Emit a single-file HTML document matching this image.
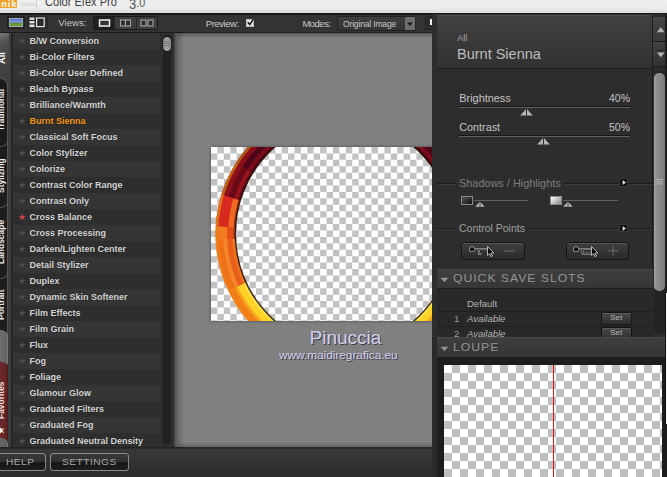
<!DOCTYPE html>
<html>
<head>
<meta charset="utf-8">
<title>Color Efex Pro 3.0</title>
<style>
*{box-sizing:border-box;margin:0;padding:0}
html,body{width:667px;height:477px;overflow:hidden}
body{position:relative;background:#808080;font-family:"Liberation Sans",sans-serif;color:#ccc;font-size:10px}
.abs{position:absolute}
/* title strip */
#title{left:0;top:0;width:667px;height:13.4px;background:linear-gradient(#efefef 0%,#ececec 60%,#dcdcdc 100%);overflow:hidden}
#title .nik{left:0;top:-2px;width:17.1px;height:10.1px;background:#f2a324;color:#fff;font-weight:bold;font-size:9px;line-height:10px;text-align:left;padding-left:1.2px;letter-spacing:1.1px;padding-top:.6px}
#title .sw{left:20px;top:.8px;font-size:4.5px;color:#cfcfcf;line-height:8px;letter-spacing:-.1px}
#title .div{left:36px;top:0;width:1px;height:9px;background:#cfcfcf}
#title .name{left:44.7px;top:-6.1px;font-size:13.5px;line-height:16px;color:#3c3c3c;white-space:nowrap;transform-origin:0 0;transform:scaleX(.819)}
#title .ver{left:128.5px;top:-6.8px;font-size:15px;line-height:18px;color:#555;white-space:nowrap;transform-origin:0 0;transform:scaleX(.86)}
/* toolbar */
#toolbar{left:0;top:13px;width:667px;height:20px;background:#333;border-top:2px solid #1a1a1a;border-bottom:1px solid #1c1c1c}
#toolbar .lbl{color:#c8c8c8;font-size:10px;line-height:12px;white-space:nowrap}
/* left panel */
#left{left:0;top:33px;width:177px;height:414px;background:#262626;overflow:hidden}
#tabs{left:0;top:0;width:8.5px;height:414px;background:#3c3c3c;overflow:hidden}
#tabedge{left:8.5px;top:0;width:2.3px;height:414px;background:#3e3e3e}
#list{left:13px;top:0;width:147px;height:414px;overflow:hidden}
#list .row{position:absolute;left:0;width:147px;height:16px;line-height:16px;font-weight:bold;font-size:9px;color:#d6d6d6;padding-left:16.5px;white-space:nowrap;text-shadow:0 0 1px rgba(0,0,0,.6)}
#list .row.a{background:#2e2e2e}
#list .row.b{background:#353535}
#list .row.sel{color:#f59a14}
#list .star{position:absolute;left:5px;top:0;font-size:9px;color:#4e4e4e;font-weight:normal;text-shadow:none}
#list .star.on{color:#d04848}
#sbar{left:160px;top:0;width:14px;height:414px;background:#2e2e2e}
#sbar .groove{left:2.7px;top:2px;width:8.8px;height:409px;border-radius:4.4px;background:#232323;box-shadow:inset 0 0 2px #1a1a1a}
#sbar .thumb{left:2px;top:2.5px;width:10.4px;height:16.5px;border-radius:5.2px;background:linear-gradient(90deg,#808080,#a4a4a4 40%,#8c8c8c);border:1px solid #1c1c1c}
#ledge{left:174px;top:0;width:3px;height:414px;background:linear-gradient(90deg,#454545,#626262)}
.vtab{position:absolute;left:-3px;width:11.3px;border:1px solid #555}
.vtxt{position:absolute;transform-origin:0 0;transform:rotate(-90deg);white-space:nowrap;line-height:9px;height:9px;font-weight:bold;font-size:8.6px}
/* bottom */
#bottom{left:0;top:447px;width:667px;height:30px;background:linear-gradient(#242424 0,#242424 1px,#393939 2.5px,#2b2b2b 100%)}
.bbtn{position:absolute;top:6.3px;height:18px;border:1px solid #8a8a8a;border-radius:3px;background:linear-gradient(#3a3a3a 0%,#303030 48%,#161616 52%,#1e1e1e 100%);color:#a9a9a9;font-size:9.3px;line-height:16px;white-space:nowrap}
.bbtn span{position:absolute;top:0;letter-spacing:.4px;transform-origin:0 50%;transform:scaleX(1.1)}
/* center */
#canvas{overflow:hidden;box-shadow:0 0 3px rgba(0,0,0,.45)}
.wm{position:absolute;white-space:nowrap;color:#d4d0ec;text-shadow:1px 1px 0 #3c3c4c;font-family:"Liberation Sans",sans-serif}
/* right panel */
#right{left:432px;top:14px;width:235px;height:463px;background:#2d2d2d;overflow:hidden}
#right .t{position:absolute;white-space:nowrap;color:#c4c4c4;font-size:11px;line-height:13px}
.cpb{border:1px solid #161616;border-radius:3px;background:linear-gradient(#3f3f3f,#2a2a2a);box-shadow:inset 0 1px 0 #555}
.setb{width:31.5px;height:12.5px;border:1px solid #161616;border-radius:2px;background:linear-gradient(#484848,#303030);box-shadow:inset 0 1px 0 #5a5a5a;color:#b4b4b4;font-size:8px;line-height:10.5px;text-align:center}
#right .xt{font-size:10.2px;letter-spacing:.8px;color:#949494;transform-origin:0 50%;transform:scaleX(1.2)}
</style>
</head>
<body>
<div id="title" class="abs">
  <div class="abs nik">nik</div>
  <div class="abs sw">Software</div>
  <div class="abs div"></div>
  <div class="abs name">Color Efex Pro</div>
  <div class="abs ver"><span style="font-size:15px;position:relative;top:1.6px">3</span><span style="font-size:12.5px">.0</span></div>
</div>
<div id="toolbar" class="abs">
  <div class="abs" style="left:6.5px;top:0.5px;width:18.5px;height:13.5px;border:1px solid #1f1f1f;border-radius:2px;background:#2a2a2a"></div>
  <div class="abs" style="left:8.8px;top:2.9px;width:14.7px;height:8.8px;background:linear-gradient(#5a78c8 0%,#7f9ad8 52%,#5a8a28 60%,#76a030 100%);border:1px solid #98a8b8"></div>
  <div class="abs" style="left:27px;top:0.5px;width:20.5px;height:13.5px;border:1px solid #262626;border-radius:2px;background:#2c2c2c"></div>
  <svg class="abs" style="left:29px;top:2px" width="17" height="11" viewBox="0 0 17 11"><rect x="0.5" y="0.5" width="5" height="2.4" fill="#ddd"/><rect x="0.5" y="4" width="5" height="2.4" fill="#ddd"/><rect x="0.5" y="7.5" width="5" height="2.6" fill="#ddd"/><rect x="7.6" y="1" width="7.6" height="8.6" fill="#2a2a2a" stroke="#e4e4e4" stroke-width="1.2"/></svg>
  <div class="abs lbl" style="left:58.3px;top:2px;font-size:9.6px">Views:</div>
  <div class="abs" style="left:93px;top:1px;width:65px;height:13.5px;border:1px solid #1a1a1a;border-radius:2px;background:#3d3d3d"></div>
  <div class="abs" style="left:94px;top:2px;width:20px;height:11.5px;background:#202020"></div>
  <div class="abs" style="left:114px;top:2px;width:1px;height:11.5px;background:#2a2a2a"></div>
  <div class="abs" style="left:135.5px;top:2px;width:1px;height:11.5px;background:#2a2a2a"></div>
  <svg class="abs" style="left:94px;top:2px" width="64" height="12" viewBox="0 0 64 12"><rect x="5.5" y="3" width="10" height="6" fill="#333" stroke="#f2f2f2" stroke-width="1.5"/><g fill="#2c2c2c" stroke="#a8a8a8" stroke-width="1.1"><rect x="26.5" y="3" width="5" height="6"/><rect x="31.5" y="3" width="5" height="6"/><rect x="47" y="3" width="5" height="6"/><rect x="54" y="3" width="5" height="6"/></g></svg>
  <div class="abs lbl" style="left:205.8px;top:2.5px;font-size:9.5px;letter-spacing:-.45px">Preview:</div>
  <div class="abs" style="left:246px;top:4px;width:8px;height:8px;background:#e6e6e6;border:1px solid #bbb"></div>
  <svg class="abs" style="left:246px;top:3px" width="9" height="9" viewBox="0 0 9 9"><path d="M1.8 4.2 L3.8 6.6 L7.4 1.2" fill="none" stroke="#111" stroke-width="1.5"/></svg>
  <div class="abs lbl" style="left:302.4px;top:2.5px;font-size:9.5px;letter-spacing:-.5px">Modes:</div>
  <div class="abs" style="left:337px;top:1px;width:79px;height:14.5px;border:1px solid #242424;border-radius:2px;background:linear-gradient(#3e3e3e,#343434)"></div>
  <div class="abs lbl" style="left:343px;top:2.5px;font-size:8.6px;letter-spacing:-.2px;color:#c6c6c6">Original Image</div>
  <div class="abs" style="left:405px;top:1.5px;width:10px;height:13px;background:#6e6e6e;border-radius:1px"></div>
  <svg class="abs" style="left:405px;top:1.5px" width="10" height="13" viewBox="0 0 10 13"><path d="M2.2 5.6 L7.8 5.6 L5 9 Z" fill="#161616"/></svg>
  <div class="abs" style="left:425px;top:1px;width:10px;height:14px;border:1px solid #222;border-radius:2px;background:#2c2c2c"></div>
  <div class="abs" style="left:430px;top:4px;width:3px;height:6px;background:#f0f0f0"></div>
</div>
<div id="left" class="abs">
  <div id="tabs" class="abs">
    <div class="abs" style="left:0;top:0;width:8.5px;height:56px;background:linear-gradient(160deg,#777 0%,#505050 18%,#444 45%,#3e3e3e 100%)"></div>
    <div class="vtab" style="top:45px;height:68.8px;background:#1b1b1b;z-index:10;border-radius:0 7.5px 7.5px 0 / 0 7.5px 6px 0"></div>
    <div class="vtab" style="top:105px;height:69.8px;background:#1d1d1d;z-index:9;border-radius:0 0 7.5px 0 / 0 0 6px 0"></div>
    <div class="vtab" style="top:166px;height:79.8px;background:#1d1d1d;z-index:8;border-radius:0 0 7.5px 0 / 0 0 6px 0"></div>
    <div class="vtab" style="top:237px;height:75px;background:#1d1d1d;z-index:7;border-radius:0"></div>
    <div class="vtab" style="top:296.5px;height:122.5px;background:linear-gradient(90deg,#707070,#626262);z-index:11;border-radius:0 7.5px 0 0 / 0 6.5px 0 0;border-color:#7a7a7a"></div>
    <div class="abs" style="left:0;top:328.3px;width:8px;height:84px;background:linear-gradient(90deg,#6c2a2c 0%,#642426 70%,#4c1a1c 100%);z-index:12;clip-path:polygon(0 0,100% 3px,100% 100%,0 100%)"></div>
    <div class="vtab" style="top:404.5px;height:14.5px;background:linear-gradient(90deg,#6a6a6a,#5c5c5c);z-index:13;border-radius:0 7.5px 0 0 / 0 6px 0 0;border-color:#777"></div>
    <div class="vtxt" style="left:-2.34px;top:30.8px;color:#fff;z-index:20;font-size:9.2px">All</div>
    <div class="vtxt" style="left:-2.8px;top:98px;color:#e8e8e8;z-index:20;font-size:8.3px">Traditional</div>
    <div class="vtxt" style="left:-2.8px;top:160.3px;color:#e8e8e8;z-index:20;font-size:8.45px">Stylizing</div>
    <div class="vtxt" style="left:-2.8px;top:230.7px;color:#e8e8e8;z-index:20;font-size:8.45px">Landscape</div>
    <div class="vtxt" style="left:-2.8px;top:286.7px;color:#e8e8e8;z-index:20;font-size:8.6px">Portrait</div>
    <div class="vtxt" style="left:-2.8px;top:386px;color:#eadede;z-index:20;font-size:8.45px">Favorites</div>
    <div class="vtxt" style="left:-4.5px;top:401.5px;color:#eee;z-index:20;font-size:10px;font-weight:normal">★</div>
  </div>
  <div id="tabedge" class="abs"></div>
  <div id="list" class="abs">
    <div class="row b" style="top:0px"><span class="star">★</span>B/W Conversion</div>
    <div class="row a" style="top:16px"><span class="star">★</span>Bi-Color Filters</div>
    <div class="row b" style="top:32px"><span class="star">★</span>Bi-Color User Defined</div>
    <div class="row a" style="top:48px"><span class="star">★</span>Bleach Bypass</div>
    <div class="row b" style="top:64px"><span class="star">★</span>Brilliance/Warmth</div>
    <div class="row a sel" style="top:80px"><span class="star">★</span>Burnt Sienna</div>
    <div class="row b" style="top:96px"><span class="star">★</span>Classical Soft Focus</div>
    <div class="row a" style="top:112px"><span class="star">★</span>Color Stylizer</div>
    <div class="row b" style="top:128px"><span class="star">★</span>Colorize</div>
    <div class="row a" style="top:144px"><span class="star">★</span>Contrast Color Range</div>
    <div class="row b" style="top:160px"><span class="star">★</span>Contrast Only</div>
    <div class="row a" style="top:176px"><span class="star on">★</span>Cross Balance</div>
    <div class="row b" style="top:192px"><span class="star">★</span>Cross Processing</div>
    <div class="row a" style="top:208px"><span class="star">★</span>Darken/Lighten Center</div>
    <div class="row b" style="top:224px"><span class="star">★</span>Detail Stylizer</div>
    <div class="row a" style="top:240px"><span class="star">★</span>Duplex</div>
    <div class="row b" style="top:256px"><span class="star">★</span>Dynamic Skin Softener</div>
    <div class="row a" style="top:272px"><span class="star">★</span>Film Effects</div>
    <div class="row b" style="top:288px"><span class="star">★</span>Film Grain</div>
    <div class="row a" style="top:304px"><span class="star">★</span>Flux</div>
    <div class="row b" style="top:320px"><span class="star">★</span>Fog</div>
    <div class="row a" style="top:336px"><span class="star">★</span>Foliage</div>
    <div class="row b" style="top:352px"><span class="star">★</span>Glamour Glow</div>
    <div class="row a" style="top:368px"><span class="star">★</span>Graduated Filters</div>
    <div class="row b" style="top:384px"><span class="star">★</span>Graduated Fog</div>
    <div class="row a" style="top:400px"><span class="star">★</span>Graduated Neutral Density</div>
  </div>
  <div id="sbar" class="abs"><div class="abs groove"></div><div class="abs thumb"></div><div class="abs" style="left:4px;top:8px;width:6px;height:1px;background:#777;box-shadow:0 2px 0 #777,0 4px 0 #777"></div></div>
  <div id="ledge" class="abs"></div>
</div>

<div id="canvas" class="abs" style="left:210.6px;top:147.3px;width:230px;height:173.6px;background:#fff">
<svg class="abs" style="left:0;top:0" width="230" height="174" viewBox="0 0 230 174">
<defs>
<clipPath id="ringclip"><path clip-rule="evenodd" d="M4.4 86.85a129 131 0 1 0 258 0a129 131 0 1 0 -258 0Z M24.4 86.85a109 113 0 1 1 218 0a109 113 0 1 1 -218 0Z"/></clipPath>
<linearGradient id="gv" x1="0" y1="0" x2="0" y2="174" gradientUnits="userSpaceOnUse">
<stop offset="0" stop-color="#5c0816"/><stop offset=".28" stop-color="#8a101c"/><stop offset=".285" stop-color="#d42a20"/><stop offset=".46" stop-color="#e03a1c"/><stop offset=".465" stop-color="#f0741c"/><stop offset=".80" stop-color="#f6801c"/><stop offset=".805" stop-color="#fbb020"/><stop offset="1" stop-color="#ffd024"/>
</linearGradient>
</defs>
<g stroke="#c2c2c2" stroke-width="6.42" stroke-dasharray="6.42 6.42" fill="none"><path d="M0 3.21H232" stroke-dashoffset="6.42"/><path d="M0 9.63H232" stroke-dashoffset="0"/><path d="M0 16.05H232" stroke-dashoffset="6.42"/><path d="M0 22.47H232" stroke-dashoffset="0"/><path d="M0 28.89H232" stroke-dashoffset="6.42"/><path d="M0 35.31H232" stroke-dashoffset="0"/><path d="M0 41.73H232" stroke-dashoffset="6.42"/><path d="M0 48.15H232" stroke-dashoffset="0"/><path d="M0 54.57H232" stroke-dashoffset="6.42"/><path d="M0 60.99H232" stroke-dashoffset="0"/><path d="M0 67.41H232" stroke-dashoffset="6.42"/><path d="M0 73.83H232" stroke-dashoffset="0"/><path d="M0 80.25H232" stroke-dashoffset="6.42"/><path d="M0 86.67H232" stroke-dashoffset="0"/><path d="M0 93.09H232" stroke-dashoffset="6.42"/><path d="M0 99.51H232" stroke-dashoffset="0"/><path d="M0 105.93H232" stroke-dashoffset="6.42"/><path d="M0 112.35H232" stroke-dashoffset="0"/><path d="M0 118.77H232" stroke-dashoffset="6.42"/><path d="M0 125.19H232" stroke-dashoffset="0"/><path d="M0 131.61H232" stroke-dashoffset="6.42"/><path d="M0 138.03H232" stroke-dashoffset="0"/><path d="M0 144.45H232" stroke-dashoffset="6.42"/><path d="M0 150.87H232" stroke-dashoffset="0"/><path d="M0 157.29H232" stroke-dashoffset="6.42"/><path d="M0 163.71H232" stroke-dashoffset="0"/><path d="M0 170.13H232" stroke-dashoffset="6.42"/><path d="M0 176.55H232" stroke-dashoffset="0"/></g>
<g clip-path="url(#ringclip)">
<rect x="0" y="0" width="230" height="174" fill="url(#gv)"/>
<defs>
<clipPath id="b0"><path d="M133.4 86.8 L133.4 -133.2 L29.1 -106.9 L-50.3 -34.3Z M133.4 86.8 L133.4 -133.2 L237.7 -106.9 L317.1 -34.3Z"/></clipPath>
<clipPath id="b1"><path d="M133.4 86.8 L-50.3 -34.3 L-65.1 -8.0 L-76.2 20.0Z M133.4 86.8 L317.1 -34.3 L331.9 -8.0 L343.0 20.0Z"/></clipPath>
<clipPath id="b2"><path d="M133.4 86.8 L-76.2 20.0 L-82.9 46.6 L-86.2 73.8Z M133.4 86.8 L343.0 20.0 L349.7 46.6 L353.0 73.8Z"/></clipPath>
<clipPath id="b3"><path d="M133.4 86.8 L-86.2 73.8 L-86.6 85.6 L-86.3 97.4Z M133.4 86.8 L353.0 73.8 L353.4 85.6 L353.1 97.4Z"/></clipPath>
<clipPath id="b4"><path d="M133.4 86.8 L-86.3 97.4 L-79.6 142.0 L-63.8 184.3Z M133.4 86.8 L353.1 97.4 L346.4 142.0 L330.6 184.3Z"/></clipPath>
<clipPath id="b5"><path d="M133.4 86.8 L-63.8 184.3 L17.3 273.7 L133.4 306.9Z M133.4 86.8 L330.6 184.3 L249.5 273.7 L133.4 306.9Z"/></clipPath>
</defs>
<g clip-path="url(#b0)" fill="none">
<ellipse cx="133.4" cy="86.85" rx="127.50" ry="129.65" stroke="#b05a10" stroke-width="3.65"/>
<ellipse cx="133.4" cy="86.85" rx="123.50" ry="126.05" stroke="#8a0e18" stroke-width="5.55"/>
<ellipse cx="133.4" cy="86.85" rx="118.00" ry="121.10" stroke="#50061a" stroke-width="6.50"/>
<ellipse cx="133.4" cy="86.85" rx="113.00" ry="116.60" stroke="#7c0c1c" stroke-width="4.60"/>
<ellipse cx="133.4" cy="86.85" rx="110.00" ry="113.90" stroke="#520812" stroke-width="2.70"/>
</g>
<g clip-path="url(#b1)" fill="none">
<ellipse cx="133.4" cy="86.85" rx="127.50" ry="129.65" stroke="#c0620e" stroke-width="3.65"/>
<ellipse cx="133.4" cy="86.85" rx="123.50" ry="126.05" stroke="#8e101a" stroke-width="5.55"/>
<ellipse cx="133.4" cy="86.85" rx="118.00" ry="121.10" stroke="#6a0a18" stroke-width="6.50"/>
<ellipse cx="133.4" cy="86.85" rx="113.00" ry="116.60" stroke="#96141e" stroke-width="4.60"/>
<ellipse cx="133.4" cy="86.85" rx="110.00" ry="113.90" stroke="#5e0a14" stroke-width="2.70"/>
</g>
<g clip-path="url(#b2)" fill="none">
<ellipse cx="133.4" cy="86.85" rx="127.50" ry="129.65" stroke="#e07018" stroke-width="3.65"/>
<ellipse cx="133.4" cy="86.85" rx="121.00" ry="123.80" stroke="#d62a20" stroke-width="10.30"/>
<ellipse cx="133.4" cy="86.85" rx="113.30" ry="116.87" stroke="#f06a22" stroke-width="5.93"/>
<ellipse cx="133.4" cy="86.85" rx="109.80" ry="113.72" stroke="#9a3010" stroke-width="2.32"/>
</g>
<g clip-path="url(#b3)" fill="none">
<ellipse cx="133.4" cy="86.85" rx="127.50" ry="129.65" stroke="#ea7c1a" stroke-width="3.65"/>
<ellipse cx="133.4" cy="86.85" rx="121.50" ry="124.25" stroke="#f27c20" stroke-width="9.35"/>
<ellipse cx="133.4" cy="86.85" rx="113.80" ry="117.32" stroke="#e64c1a" stroke-width="6.88"/>
<ellipse cx="133.4" cy="86.85" rx="109.80" ry="113.72" stroke="#a03810" stroke-width="2.32"/>
</g>
<g clip-path="url(#b4)" fill="none">
<ellipse cx="133.4" cy="86.85" rx="127.50" ry="129.65" stroke="#ee7c18" stroke-width="3.65"/>
<ellipse cx="133.4" cy="86.85" rx="123.50" ry="126.05" stroke="#f07218" stroke-width="5.55"/>
<ellipse cx="133.4" cy="86.85" rx="119.00" ry="122.00" stroke="#f6842a" stroke-width="4.60"/>
<ellipse cx="133.4" cy="86.85" rx="114.50" ry="117.95" stroke="#e85e1a" stroke-width="5.55"/>
<ellipse cx="133.4" cy="86.85" rx="110.50" ry="114.35" stroke="#ee741c" stroke-width="3.65"/>
</g>
<g clip-path="url(#b5)" fill="none">
<ellipse cx="133.4" cy="86.85" rx="125.00" ry="127.40" stroke="#f27e18" stroke-width="8.40"/>
<ellipse cx="133.4" cy="86.85" rx="119.50" ry="122.45" stroke="#f8a41e" stroke-width="3.65"/>
<ellipse cx="133.4" cy="86.85" rx="114.70" ry="118.13" stroke="#ffd226" stroke-width="7.07"/>
<ellipse cx="133.4" cy="86.85" rx="110.20" ry="114.08" stroke="#ffe44c" stroke-width="3.08"/>
</g>
</g>
<ellipse cx="133.4" cy="86.85" rx="109" ry="113" fill="none" stroke="#200a06" stroke-opacity=".85" stroke-width="1.4"/>
</svg>
</div>
<div class="wm" style="left:309.5px;top:326.8px;font-size:19px;line-height:22px;letter-spacing:0">Pinuccia</div>
<div class="wm" style="left:279px;top:347.5px;font-size:11.8px;line-height:14px">www.maidiregrafica.eu</div>
<div class="abs" style="left:177px;top:33px;width:7px;height:414px;background:linear-gradient(90deg,rgba(0,0,0,.22),rgba(0,0,0,0))"></div>
<div class="abs" style="left:177px;top:33px;width:255px;height:5px;background:linear-gradient(rgba(0,0,0,.3),rgba(0,0,0,0))"></div>
<div class="abs" style="left:177px;top:442px;width:255px;height:5px;background:linear-gradient(rgba(0,0,0,0),rgba(0,0,0,.22))"></div>

<div id="bottom" class="abs">
  <div class="bbtn" style="left:-4px;width:50px"><span style="left:9.3px">HELP</span></div>
  <div class="bbtn" style="left:49.5px;width:79px"><span style="left:11px">SETTINGS</span></div>
</div>
<div id="right" class="abs">
  <div class="abs pc" style="left:-432px;top:-14px;width:667px;height:477px">
    <!-- header -->
    <div class="abs" style="left:436.5px;top:15px;width:216px;height:54px;background:linear-gradient(#404040,#323232);border-top:1px solid #4c4c4c;border-bottom:1px solid #1e1e1e"></div>
    <div class="t" style="left:457.3px;top:32px;font-size:9px;color:#a8a8a8">All</div>
    <div class="t" style="left:457px;top:45.5px;font-size:14.5px;line-height:17px;color:#bcbcbc">Burnt Sienna</div>
    <!-- scrollbar -->
    <div class="abs" style="left:651.5px;top:14px;width:15.5px;height:323px;background:#2c2c2c;border-left:1px solid #1d1d1d"></div>
    <div class="abs" style="left:664.7px;top:14px;width:2.3px;height:323px;background:#1c1c1c"></div>
    <div class="abs" style="left:652.5px;top:16.5px;width:12.2px;height:25px;background:linear-gradient(#454545,#3a3a3a);border-bottom:1px solid #1c1c1c"></div>
    <div class="abs" style="left:652.5px;top:42px;width:12.2px;height:25px;background:linear-gradient(#424242,#343434);border-bottom:1px solid #1c1c1c"></div>
    <svg class="abs" style="left:652.5px;top:14px" width="13" height="54" viewBox="0 0 13 54"><path d="M3.9 18.3 L11.7 18.3 L7.8 13.2 Z" fill="#b4b4b4"/><path d="M3.9 38.5 L11.7 38.5 L7.8 43.3 Z" fill="#b4b4b4"/><path d="M3.9 36.5 H11.7" stroke="#222" stroke-width="1"/></svg>
    <div class="abs" style="left:653.8px;top:71px;width:10.9px;height:262.5px;border-radius:5.5px;background:#232323"></div>
    <div class="abs" style="left:654.2px;top:73px;width:10.4px;height:217.5px;border-radius:5px;background:linear-gradient(90deg,#a4a4a4 0%,#8e8e8e 25%,#868686 70%,#787878 100%)"></div>
    <div class="abs" style="left:656.3px;top:178.8px;width:6.5px;height:1px;background:#b4b4b4;box-shadow:0 2.2px 0 #b4b4b4,0 4.4px 0 #b4b4b4"></div>
    <!-- sliders -->
    <div class="t" style="left:459.3px;top:92px;font-size:10.9px">Brightness</div>
    <div class="t" style="left:589px;top:92px;width:41px;text-align:right;font-size:10.5px">40%</div>
    <div class="abs" style="left:458.5px;top:105.5px;width:171.5px;height:2px;background:linear-gradient(#181818 50%,#606060 50%)"></div>
    <svg class="abs" style="left:520.1px;top:107.7px" width="13" height="8" viewBox="0 0 13 8"><path d="M0.2 7.6 L6.5 0.4 L12.8 7.6 Z" fill="#b4b4b4"/><path d="M6.5 0.4 L6.5 7.6" stroke="#2a2a2a" stroke-width="1"/></svg>
    <div class="t" style="left:459.3px;top:120.5px;font-size:10.8px">Contrast</div>
    <div class="t" style="left:589px;top:120.5px;width:41px;text-align:right;font-size:10.5px">50%</div>
    <div class="abs" style="left:458.5px;top:134.8px;width:171.5px;height:2px;background:linear-gradient(#181818 50%,#606060 50%)"></div>
    <svg class="abs" style="left:537.1px;top:136.7px" width="13" height="8" viewBox="0 0 13 8"><path d="M0.2 7.6 L6.5 0.4 L12.8 7.6 Z" fill="#b4b4b4"/><path d="M6.5 0.4 L6.5 7.6" stroke="#2a2a2a" stroke-width="1"/></svg>
    <!-- shadows / highlights -->
    <div class="abs" style="left:436.5px;top:183px;width:216px;height:1px;background:#1a1a1a;border-bottom:1px solid #3a3a3a;height:2px"></div>
    <div class="t" style="left:456px;top:176.5px;font-size:10.9px;color:#7e7e7e;background:#2d2d2d;padding:0 3px">Shadows / Highlights</div>
    <div class="abs" style="left:619.3px;top:178.3px;width:8.5px;height:8.7px;background:#0e0e0e;border:1px solid #3a3a3a"></div>
    <svg class="abs" style="left:619.5px;top:178.2px" width="8" height="9" viewBox="0 0 8 9"><path d="M2.6 2 L6 4.5 L2.6 7 Z" fill="#ddd"/></svg>
    <div class="abs" style="left:460.8px;top:196px;width:12.7px;height:9.2px;border:1px solid #8a8a8a;background:linear-gradient(135deg,#555,#111)"></div>
    <div class="abs" style="left:474px;top:200.3px;width:54px;height:1px;background:#5e5e5e"></div>
    <svg class="abs" style="left:474.7px;top:201.3px" width="10" height="6" viewBox="0 0 10 6"><path d="M0.3 5.8 L5 0.4 L9.7 5.8 Z" fill="#b8b8b8"/><path d="M5 0.4 L5 5.8" stroke="#333" stroke-width=".9"/></svg>
    <div class="abs" style="left:549.5px;top:196px;width:12.5px;height:9.2px;border:1px solid #8a8a8a;background:linear-gradient(135deg,#fff,#888)"></div>
    <div class="abs" style="left:562.5px;top:200.3px;width:55px;height:1px;background:#5e5e5e"></div>
    <svg class="abs" style="left:562.5px;top:201.3px" width="10" height="6" viewBox="0 0 10 6"><path d="M0.3 5.8 L5 0.4 L9.7 5.8 Z" fill="#b8b8b8"/><path d="M5 0.4 L5 5.8" stroke="#333" stroke-width=".9"/></svg>
    <!-- control points -->
    <div class="abs" style="left:436.5px;top:228px;width:216px;height:2px;background:#1a1a1a;border-bottom:1px solid #3a3a3a"></div>
    <div class="t" style="left:456px;top:221.5px;font-size:10.5px;color:#a0a0a0;background:#2d2d2d;padding:0 3px">Control Points</div>
    <div class="abs" style="left:619.3px;top:223.8px;width:8.5px;height:8.7px;background:#0e0e0e;border:1px solid #3a3a3a"></div>
    <svg class="abs" style="left:619.5px;top:223.7px" width="8" height="9" viewBox="0 0 8 9"><path d="M2.6 2 L6 4.5 L2.6 7 Z" fill="#ddd"/></svg>
    <div class="abs cpb" style="left:461px;top:242px;width:63.5px;height:17.5px"></div>
    <div class="abs cpb" style="left:566px;top:242px;width:62.5px;height:17.5px"></div>
    <svg class="abs" style="left:461px;top:242px" width="64" height="18" viewBox="0 0 64 18">
      <g fill="none" stroke="#c4c4c4" stroke-width="1.7"><circle cx="11" cy="7.2" r="2" fill="#0a0a0a"/><path d="M13 7.2 H27 M18 7.2 V11.8 H20.5"/></g>
      <g fill="none" stroke="#0a0a0a" stroke-width=".7"><circle cx="11" cy="7.2" r="2" fill="#0a0a0a"/><path d="M13 7.2 H27 M18 7.2 V11.8 H20.5"/></g>
      <path d="M26.5 4.5 L26.5 13.5 L28.6 11.6 L30 14.6 L31.4 14 L30 11.1 L32.8 10.9 Z" fill="#0a0a0a" stroke="#d8d8d8" stroke-width=".8"/>
      <path d="M43 9 H53.5" stroke="#5c5c5c" stroke-width="1.4"/>
    </svg>
    <svg class="abs" style="left:566px;top:242px" width="64" height="18" viewBox="0 0 64 18">
      <g fill="none" stroke="#c4c4c4" stroke-width="1.7"><circle cx="10" cy="7.2" r="2" fill="#0a0a0a"/><path d="M12 7.2 H25.5 M16.5 7.2 V11.6 H25.5"/></g>
      <g fill="none" stroke="#0a0a0a" stroke-width=".7"><circle cx="10" cy="7.2" r="2" fill="#0a0a0a"/><path d="M12 7.2 H25.5 M16.5 7.2 V11.6 H25.5"/></g>
      <path d="M25.5 4.5 L25.5 13.5 L27.6 11.6 L29 14.6 L30.4 14 L29 11.1 L31.8 10.9 Z" fill="#0a0a0a" stroke="#d8d8d8" stroke-width=".8"/>
      <path d="M42 8.7 H52 M47 3.7 V13.7" stroke="#5c5c5c" stroke-width="1.4"/>
    </svg>
    <!-- quick save slots -->
    <div class="abs" style="left:436.5px;top:268.5px;width:216px;height:20.5px;background:linear-gradient(#3e3e3e,#363636);border-top:1px solid #484848;border-bottom:1px solid #1c1c1c"></div>
    <svg class="abs" style="left:440px;top:277px" width="9" height="6" viewBox="0 0 9 6"><path d="M0.3 0.8 L8.5 0.8 L4.4 5 Z" fill="#949494"/></svg>
    <div class="t xt" style="left:453.3px;top:271.8px">QUICK SAVE SLOTS</div>
    <div class="abs" style="left:436.5px;top:289px;width:216px;height:48px;background:#292929"></div>
    <div class="t" style="left:467px;top:297.3px;font-size:9.5px;color:#b4b4b4">Default</div>
    <div class="abs" style="left:436.5px;top:310.5px;width:216px;height:1px;background:#1f1f1f"></div>
    <div class="abs" style="left:436.5px;top:325.5px;width:216px;height:1px;background:#1f1f1f"></div>
    <div class="t" style="left:454px;top:311.5px;font-size:9.5px;color:#9a9a9a">1</div>
    <div class="t" style="left:467px;top:311.5px;font-size:9.5px;color:#b4b4b4;font-style:italic">Available</div>
    <div class="t" style="left:454px;top:327px;font-size:9.5px;color:#9a9a9a">2</div>
    <div class="t" style="left:467px;top:327px;font-size:9.5px;color:#b4b4b4;font-style:italic">Available</div>
    <div class="abs setb" style="left:600.5px;top:312px">Set</div>
    <div class="abs setb" style="left:600.5px;top:327.3px">Set</div>
    <!-- loupe -->
    <div class="abs" style="left:664.6px;top:293px;width:2.4px;height:131px;background:#111;z-index:5"></div>
    <div class="abs" style="left:665.5px;top:293px;width:1.5px;height:131px;background:#f4f4f4;z-index:5"></div>
    <div class="abs" style="left:432px;top:337px;width:235px;height:140px;background:#2a2a2a"></div>
    <div class="abs" style="left:436.5px;top:358px;width:231px;height:119px;background:#1d1d1d"></div>
    <div class="abs" style="left:436.5px;top:337px;width:231px;height:21px;background:linear-gradient(#3e3e3e,#363636);border-top:1px solid #484848;border-bottom:1px solid #1c1c1c"></div>
    <svg class="abs" style="left:440px;top:346px" width="9" height="6" viewBox="0 0 9 6"><path d="M0.3 0.8 L8.5 0.8 L4.4 5 Z" fill="#949494"/></svg>
    <div class="t xt" style="left:452.5px;top:341px">LOUPE</div>
    <div class="abs" style="left:443.7px;top:364.6px;width:218px;height:113px;background:#fff conic-gradient(#bfbfbf 25%,#fff 0 50%,#bfbfbf 0 75%,#fff 0) 0 0/16px 16px"></div>
    <div class="abs" style="left:553px;top:364.6px;width:1px;height:113px;background:#e81010"></div>
  </div>
</div>
</body>
</html>
